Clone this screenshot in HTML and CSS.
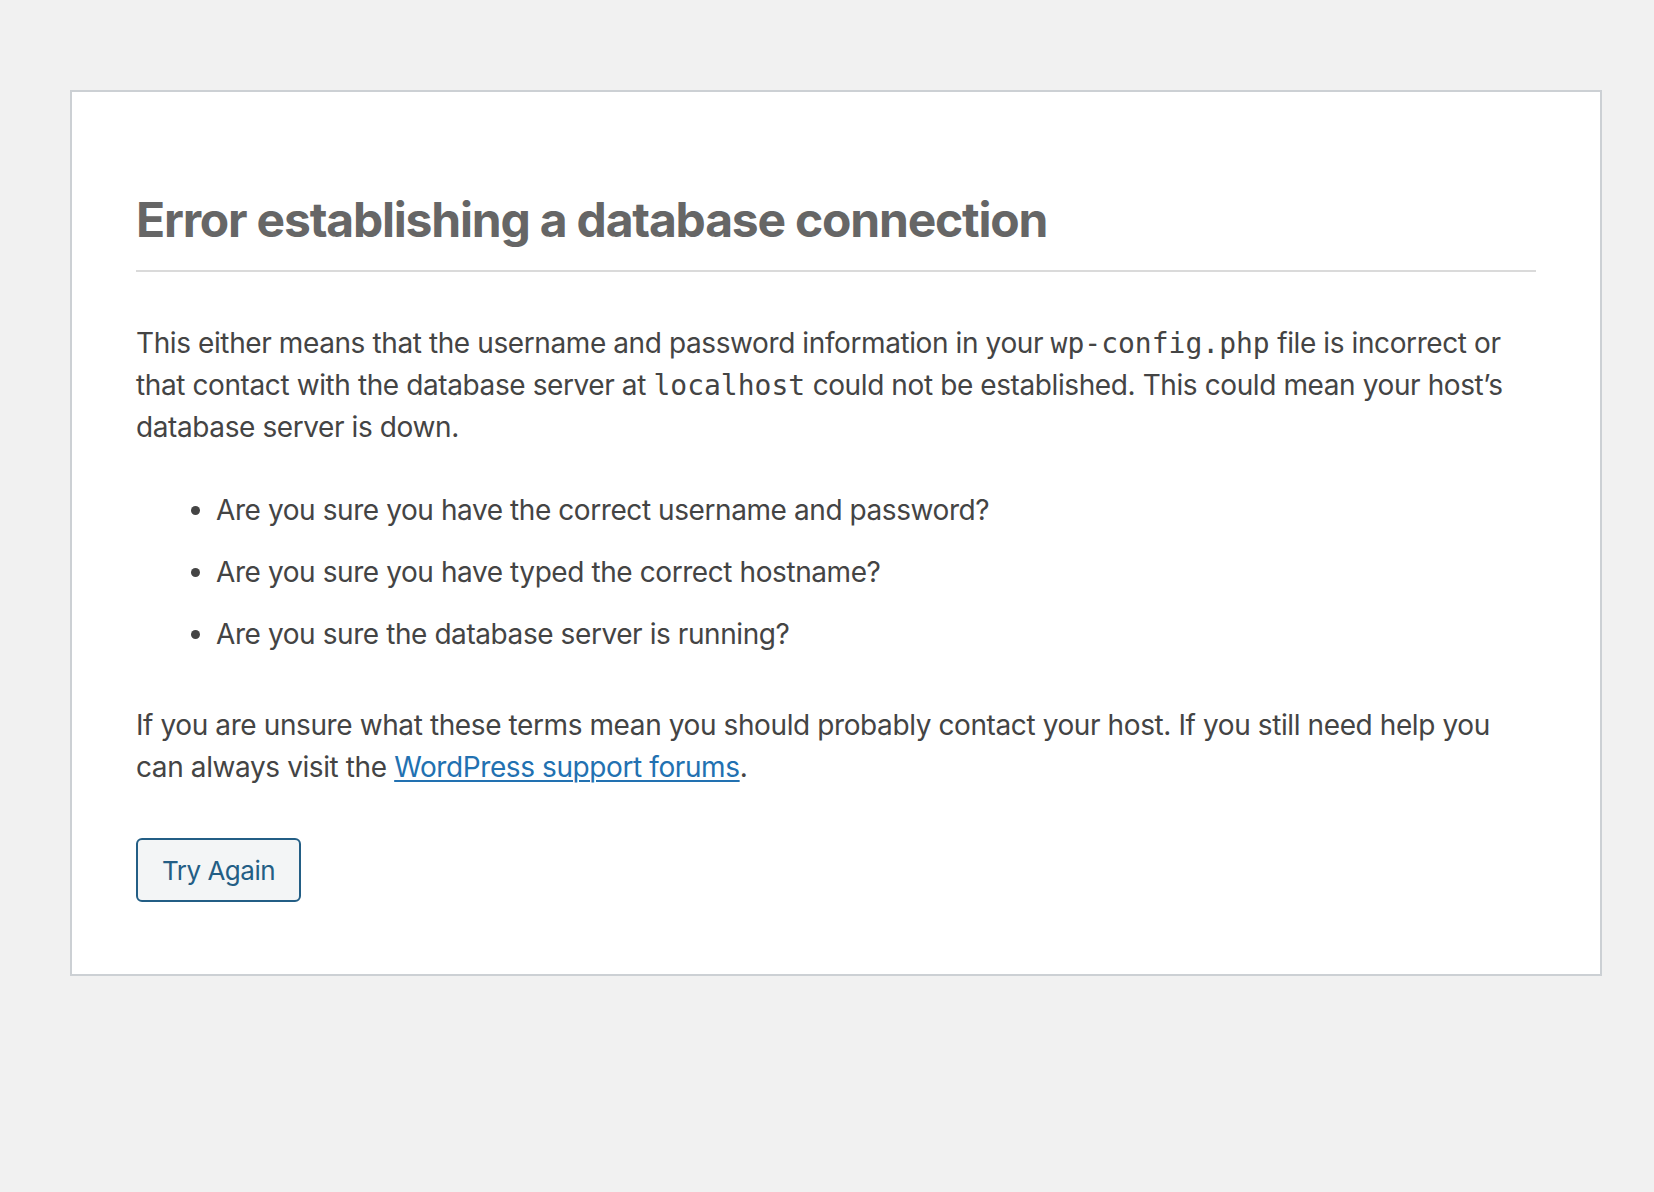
FILE: index.html
```html
<!DOCTYPE html>
<html lang="en">
<head>
<meta charset="utf-8">
<title>Database Error</title>
<link rel="stylesheet" href="styles.css">
</head>
<body>
<div class="card">
  <h1 class="title">Error establishing a database connection</h1>
  <p class="text">This either means that the username and password information in your <code class="mono">wp-config.php</code> file is incorrect or that contact with the database server at <code class="mono">localhost</code> could not be established. This could mean your host’s database server is down.</p>
  <ul class="checks">
    <li class="check">Are you sure you have the correct username and password?</li>
    <li class="check">Are you sure you have typed the correct hostname?</li>
    <li class="check">Are you sure the database server is running?</li>
  </ul>
  <p class="text text-help">If you are unsure what these terms mean you should probably contact your host. If you still need help you can always visit the <a class="link" href="#">WordPress support forums</a>.</p>
  <div class="actions"><a class="button" href="#">Try Again</a></div>
</div>
</body>
</html>
```

FILE: styles.css
```css
html, body {
  margin: 0;
  padding: 0;
}
body {
  background: #f1f1f1;
  font-family: Inter, "Noto Sans", "Liberation Sans", sans-serif;
  color: #444;
  min-height: 1192px;
}
.card {
  box-sizing: border-box;
  width: 1532px;
  margin: 90px 0 0 70px;
  padding: 0 64px 72px 64px;
  background: #fff;
  border: 2px solid #ccd0d4;
}
.title {
  margin: 99px 0 0;
  padding: 0 0 21px;
  font-size: 48px;
  line-height: 58px;
  font-weight: 700;
  letter-spacing: -1.2px;
  color: #666;
  border-bottom: 2px solid #dadada;
}
.text {
  margin: 50px 0 0;
  font-size: 28px;
  line-height: 42px;
  letter-spacing: -0.4px;
}
.mono {
  font-family: "DejaVu Sans Mono", "Liberation Mono", monospace;
  font-size: 28px;
  line-height: 1;
  letter-spacing: 0;
}
.checks {
  margin: 41px 0 0;
  padding: 0 0 0 80px;
}
.check {
  font-size: 28px;
  line-height: 42px;
  letter-spacing: -0.42px;
  margin: 0 0 20px;
}
.text-help {
  margin-top: 49px;
}
.link {
  color: #2271b1;
  text-decoration: underline;
  text-decoration-thickness: 2px;
  text-underline-offset: 3px;
}
.actions {
  margin-top: 50px;
  display: flex;
}
.button {
  box-sizing: border-box;
  display: inline-flex;
  align-items: center;
  height: 64px;
  padding: 0 24px;
  border: 2px solid #235e85;
  border-radius: 6px;
  background: #f3f5f6;
  color: #235e85;
  font-size: 26px;
  letter-spacing: -0.5px;
  text-decoration: none;
}
```
